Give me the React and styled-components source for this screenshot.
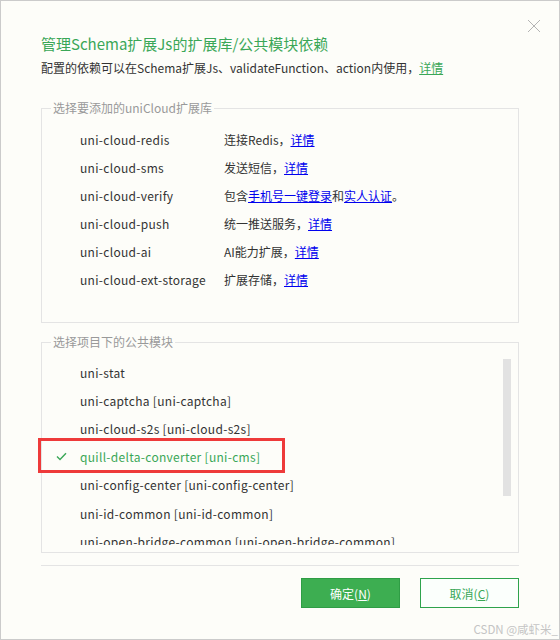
import React from 'react';
import styled, { createGlobalStyle } from 'styled-components';

const GlobalStyle = createGlobalStyle`
    html, body {
        margin: 0;
        padding: 0;
        background: #ffffff;
    }
    body {
        font-family: "Microsoft YaHei", "Noto Sans CJK SC", sans-serif;
    }
`;

// la fenêtre du dialogue
const Dialog = styled.div`
    position: relative;
    box-sizing: border-box;
    width: 560px;
    height: 640px;
    border: 1px solid #cbcbcb;
    background: #fdfdf9;
    color: #333;
    font-size: 12px;
`;

const Close = styled.button`
    position: absolute;
    top: 18px;
    right: 18px;
    width: 14px;
    height: 14px;
    padding: 0;
    border: none;
    background: none;
    cursor: pointer;
    svg { display: block; }
`;

const Header = styled.div`
    padding: 33px 0 0 40px;
`;

const Title = styled.h1`
    margin: 0;
    font-size: 15px;
    line-height: 20px;
    font-weight: normal;
    color: #3aa757;
`;

const Sub = styled.p`
    margin: 5px 0 0;
    font-size: 12px;
    line-height: 18px;
    color: #333;
`;

const Link = styled.a`
    color: ${(p) => (p.$green ? '#3aa757' : '#0000ee')};
    text-decoration: underline;
    cursor: pointer;
`;

const Body = styled.div`
    margin: 22px 0 0 40px;
    width: 478px;
`;

const Group = styled.fieldset`
    margin: ${(p) => (p.$first ? '0' : '10px 0 0')};
    padding: 0 0 ${(p) => (p.$first ? '28px' : '7px')};
    border: 1px solid #e4e4e4;
    min-width: 0;
`;

const Legend = styled.legend`
    margin-left: 9px;
    padding: 0 2px;
    font-size: 12px;
    line-height: 18px;
    color: #999;
`;

const LibList = styled.div`
    padding-top: 9px;
`;

const LibRow = styled.div`
    display: grid;
    grid-template-columns: 144px 1fr;
    padding-left: 38px;
    height: 28px;
    line-height: 28px;
    white-space: nowrap;
`;

const LibName = styled.span`
    letter-spacing: 0.3px;
`;

const ScrollArea = styled.div`
    display: flex;
    height: 194px;
`;

const ModList = styled.div`
    flex: 1;
    min-width: 0;
    overflow: hidden;
    padding-top: 7px;
`;

const Track = styled.div`
    flex: none;
    width: 8px;
    margin-right: 7px;
    padding-top: 8px;
`;

const Thumb = styled.div`
    height: 137px;
    background: #e2e2e2;
`;

const ModRow = styled.div`
    display: flex;
    align-items: center;
    height: 28.2px;
    padding-left: 14px;
    white-space: nowrap;
    letter-spacing: 0.3px;
    color: ${(p) => (p.$checked ? '#3aa757' : '#333')};
`;

const Check = styled.span`
    width: 24px;
    flex: none;
    display: flex;
    align-items: center;
`;

const Divider = styled.div`
    margin-top: 12px;
    height: 1px;
    background: #e4e4e4;
`;

const Footer = styled.div`
    display: flex;
    justify-content: flex-end;
    gap: 20px;
    margin-top: 12px;
`;

const Button = styled.button`
    box-sizing: border-box;
    width: 99px;
    height: 30px;
    padding: 0;
    font-family: inherit;
    font-size: 12px;
    cursor: pointer;
    border: 1px solid ${(p) => (p.$primary ? '#2f9d45' : '#2ea34c')};
    background: ${(p) => (p.$primary ? '#3dae51' : '#fbfffc')};
    color: ${(p) => (p.$primary ? '#fff' : '#3aa757')};
`;

// annotation rouge par-dessus la capture
const Mark = styled.div`
    position: absolute;
    left: 37px;
    top: 437px;
    width: 247px;
    height: 35px;
    box-sizing: border-box;
    border: 3px solid #ee3a3a;
    pointer-events: none;
`;

const Watermark = styled.div`
    position: absolute;
    right: 1px;
    bottom: 3px;
    font-size: 11.5px;
    line-height: 14px;
    color: #c4c4c4;
`;

const libs = [
    { name: 'uni-cloud-redis', desc: ['连接Redis，', { link: '详情' }] },
    { name: 'uni-cloud-sms', desc: ['发送短信，', { link: '详情' }] },
    { name: 'uni-cloud-verify', desc: ['包含', { link: '手机号一键登录' }, '和', { link: '实人认证' }, '。'] },
    { name: 'uni-cloud-push', desc: ['统一推送服务，', { link: '详情' }] },
    { name: 'uni-cloud-ai', desc: ['AI能力扩展，', { link: '详情' }] },
    { name: 'uni-cloud-ext-storage', desc: ['扩展存储，', { link: '详情' }] },
];

const modules = [
    'uni-stat',
    'uni-captcha [uni-captcha]',
    'uni-cloud-s2s [uni-cloud-s2s]',
    'quill-delta-converter [uni-cms]',
    'uni-config-center [uni-config-center]',
    'uni-id-common [uni-id-common]',
    'uni-open-bridge-common [uni-open-bridge-common]',
];

const CheckIcon = () => (
    <svg width="11" height="9" viewBox="0 0 11 9">
        <path d="M1 4.6 L4 7.6 L10 1.2" fill="none" stroke="#3aa757" strokeWidth="1.4" />
    </svg>
);

const App = () => {
    const selected = 'quill-delta-converter [uni-cms]';

    return (
        <>
            <GlobalStyle />
            <Dialog>
                <Close aria-label="关闭">
                    <svg width="14" height="14" viewBox="0 0 14 14">
                        <path d="M1 1 L13 13 M13 1 L1 13" stroke="#b4b4b4" strokeWidth="1" />
                    </svg>
                </Close>
                <Header>
                    <Title>管理Schema扩展Js的扩展库/公共模块依赖</Title>
                    <Sub>
                        配置的依赖可以在Schema扩展Js、validateFunction、action内使用，<Link $green>详情</Link>
                    </Sub>
                </Header>
                <Body>
                    <Group $first>
                        <Legend>选择要添加的uniCloud扩展库</Legend>
                        <LibList>
                            {libs.map((lib) => (
                                <LibRow key={lib.name}>
                                    <LibName>{lib.name}</LibName>
                                    <span>
                                        {lib.desc.map((d, i) =>
                                            typeof d === 'string' ? d : <Link key={i}>{d.link}</Link>
                                        )}
                                    </span>
                                </LibRow>
                            ))}
                        </LibList>
                    </Group>
                    <Group>
                        <Legend>选择项目下的公共模块</Legend>
                        <ScrollArea>
                            <ModList>
                                {modules.map((m) => (
                                    <ModRow key={m} $checked={m === selected}>
                                        <Check>{m === selected && <CheckIcon />}</Check>
                                        {m}
                                    </ModRow>
                                ))}
                            </ModList>
                            <Track>
                                <Thumb />
                            </Track>
                        </ScrollArea>
                    </Group>
                    <Divider />
                    <Footer>
                        <Button $primary>确定(<u>N</u>)</Button>
                        <Button>取消(<u>C</u>)</Button>
                    </Footer>
                </Body>
                <Mark />
                <Watermark>CSDN @咸虾米_</Watermark>
            </Dialog>
        </>
    );
};

export default App;
